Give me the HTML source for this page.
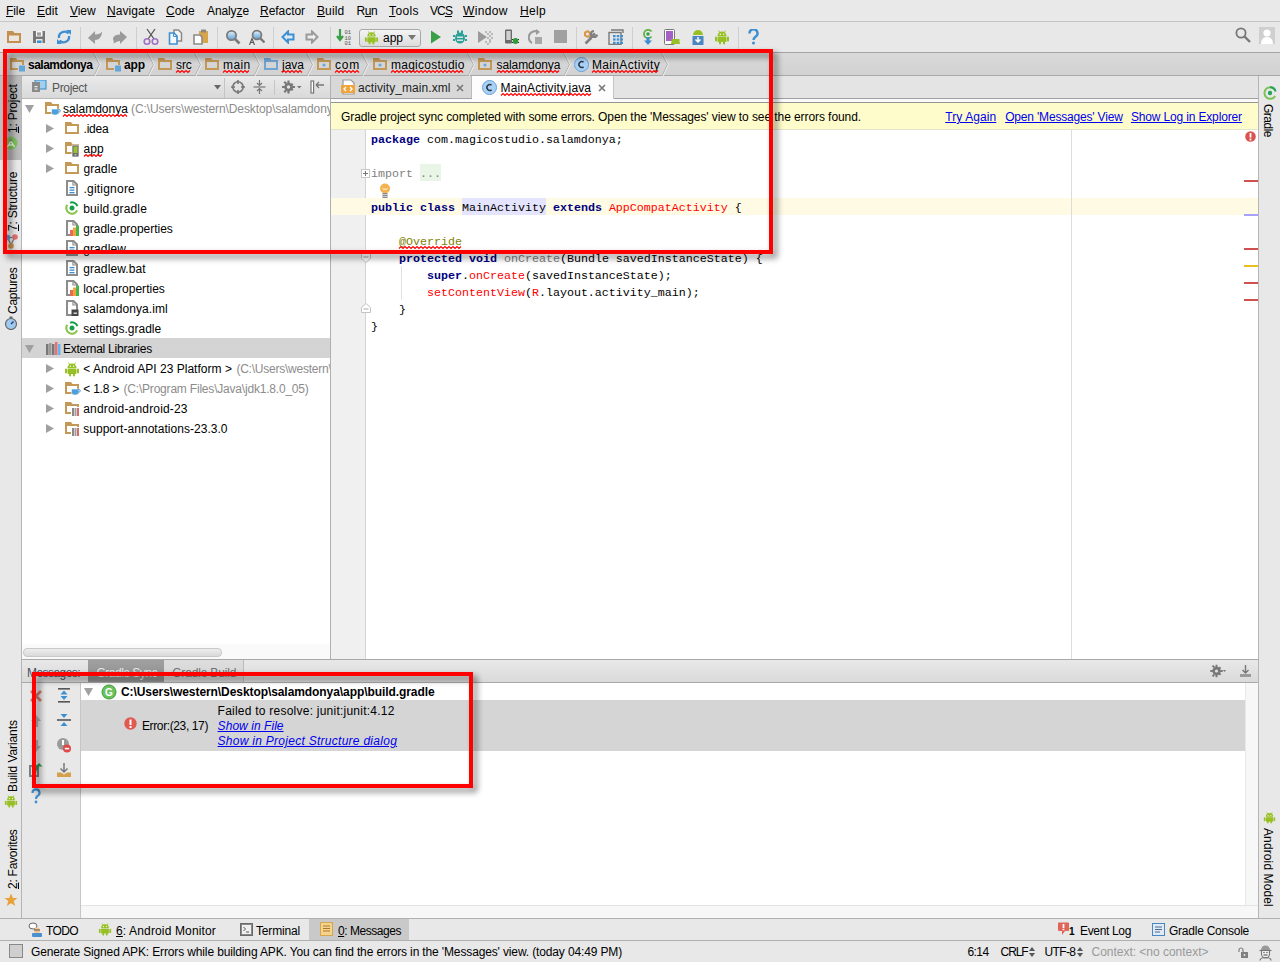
<!DOCTYPE html>
<html><head><meta charset="utf-8"><style>
*{box-sizing:border-box}
html,body{margin:0;padding:0}
body{width:1280px;height:962px;overflow:hidden;position:relative;background:#e8e8e8;font-family:"Liberation Sans",sans-serif;font-size:12px;color:#000}
.a{position:absolute}
.t{position:absolute;white-space:pre;line-height:14px}
u{text-decoration:underline;text-underline-offset:1px;text-decoration-thickness:1px}
.mono{font-family:"Liberation Mono",monospace;font-size:11.67px}
.sq{}
.lnk{color:#0000ee;text-decoration:underline;text-underline-offset:1px}
.kw{color:#000080;font-weight:bold}
.vt{position:absolute;white-space:pre;line-height:14px;transform-origin:0 0;transform:rotate(-90deg)}
.vr{position:absolute;white-space:pre;line-height:14px;transform-origin:0 0;transform:rotate(90deg)}
</style></head><body>
<div class="a" style="left:0px;top:0px;width:1280px;height:21px;background:#e9e9e9"></div>
<div class="a" style="left:0px;top:21px;width:1280px;height:1px;background:#c6c6c6"></div>
<div class="t" style="left:6px;top:4px;;letter-spacing:-0.090px"><u>F</u>ile</div>
<div class="t" style="left:37px;top:4px;;letter-spacing:0.074px"><u>E</u>dit</div>
<div class="t" style="left:70px;top:4px;;letter-spacing:-0.078px"><u>V</u>iew</div>
<div class="t" style="left:107px;top:4px;;letter-spacing:0.078px"><u>N</u>avigate</div>
<div class="t" style="left:166px;top:4px;;letter-spacing:-0.026px"><u>C</u>ode</div>
<div class="t" style="left:207px;top:4px;;letter-spacing:-0.103px">Analy<u>z</u>e</div>
<div class="t" style="left:260px;top:4px;;letter-spacing:-0.045px"><u>R</u>efactor</div>
<div class="t" style="left:317px;top:4px;;letter-spacing:0.099px"><u>B</u>uild</div>
<div class="t" style="left:356.5px;top:4px;;letter-spacing:-0.382px">R<u>u</u>n</div>
<div class="t" style="left:389px;top:4px;;letter-spacing:0.397px"><u>T</u>ools</div>
<div class="t" style="left:430px;top:4px;;letter-spacing:-0.896px">VC<u>S</u></div>
<div class="t" style="left:463px;top:4px;;letter-spacing:0.335px"><u>W</u>indow</div>
<div class="t" style="left:520px;top:4px;;letter-spacing:0.328px"><u>H</u>elp</div>
<div class="a" style="left:0px;top:22px;width:1280px;height:30px;background:#e8e8e8"></div>
<div class="a" style="left:0px;top:52px;width:1280px;height:1px;background:#a4a4a4"></div>
<div class="a" style="left:80px;top:27px;width:1px;height:22px;background:#cfcfcf"></div>
<div class="a" style="left:136px;top:27px;width:1px;height:22px;background:#cfcfcf"></div>
<div class="a" style="left:217px;top:27px;width:1px;height:22px;background:#cfcfcf"></div>
<div class="a" style="left:273px;top:27px;width:1px;height:22px;background:#cfcfcf"></div>
<div class="a" style="left:330px;top:27px;width:1px;height:22px;background:#cfcfcf"></div>
<div class="a" style="left:576px;top:27px;width:1px;height:22px;background:#cfcfcf"></div>
<div class="a" style="left:632px;top:27px;width:1px;height:22px;background:#cfcfcf"></div>
<div class="a" style="left:738px;top:27px;width:1px;height:22px;background:#cfcfcf"></div>
<svg class="a" style="left:7px;top:31px" width="15" height="13" viewBox="0 0 15 13"><path d="M0 0H6L7.5 2H14V12H0Z" fill="#c39050"/><rect x="2" y="4.5" width="10" height="5.5" fill="#ebe6df"/></svg>
<svg class="a" style="left:33px;top:31px" width="13" height="13" viewBox="0 0 13 13"><path d="M0 0H12V12H0Z" fill="#777"/><rect x="3" y="0" width="6.5" height="5.5" fill="#fafafa"/><rect x="4" y="1.6" width="4" height="1" fill="#666"/><rect x="4" y="3.4" width="4" height="1" fill="#666"/><rect x="3" y="8" width="6.5" height="4" fill="#e8e8e8"/><rect x="4" y="9.5" width="4.5" height="2.5" fill="#3a8fd0"/></svg>
<svg class="a" style="left:56px;top:29px" width="16" height="16" viewBox="0 0 16 16"><path d="M12.5 4.5A5.5 5.5 0 0 0 3 9" fill="none" stroke="#3d8fd1" stroke-width="2.4"/><path d="M3.5 11.5A5.5 5.5 0 0 0 13 7" fill="none" stroke="#3d8fd1" stroke-width="2.4"/><path d="M10 1h5v5z" fill="#3d8fd1"/><path d="M6 15H1v-5z" fill="#3d8fd1"/></svg>
<svg class="a" style="left:88px;top:31px" width="15" height="13" viewBox="0 0 15 13"><path d="M0 7L7 0V3.5C10.5 3.5 13 2.5 14 0.5C14 6 11 9 7 9V13Z" fill="#9a9a9a"/></svg>
<svg class="a" style="left:112px;top:31px" width="15" height="13" viewBox="0 0 15 13"><path d="M15 6L8 0V3.5C4.5 3.5 2 4.5 1 7C1 10 3 11.5 1 13C4 11 6 10 8 10V13Z" fill="#9a9a9a"/></svg>
<svg class="a" style="left:143px;top:28px" width="16" height="18" viewBox="0 0 16 18"><path d="M4 1l7 10M12 1L5 11" stroke="#555" stroke-width="1.3"/><circle cx="4" cy="13.5" r="2.8" fill="none" stroke="#a070c0" stroke-width="1.6"/><circle cx="12" cy="13.5" r="2.8" fill="none" stroke="#a070c0" stroke-width="1.6"/></svg>
<svg class="a" style="left:168px;top:29px" width="16" height="16" viewBox="0 0 16 16"><path d="M6 1H10.5L13.5 4V12H6Z" fill="#f4f4f4" stroke="#8a8a8a" stroke-width="1.5"/><path d="M1.5 4H6L9 7V15H1.5Z" fill="#f4f8fc" stroke="#3d8fd1" stroke-width="1.6"/><path d="M5.5 4V7.5H9" fill="none" stroke="#3d8fd1" stroke-width="1"/></svg>
<svg class="a" style="left:193px;top:29px" width="16" height="16" viewBox="0 0 16 16"><rect x="6" y="2" width="9" height="12" fill="#d9a54a"/><rect x="8" y="0.5" width="5" height="3" fill="#888"/><path d="M1 6h6l2 2v7H1z" fill="#fff" stroke="#8a8a8a" stroke-width="1.6"/></svg>
<svg class="a" style="left:225px;top:29px" width="16" height="16" viewBox="0 0 16 16"><defs><linearGradient id="lg1" x1="0" y1="0" x2="0" y2="1"><stop offset="0" stop-color="#e6f2fb"/><stop offset="1" stop-color="#5a9fd6"/></linearGradient></defs><circle cx="6.5" cy="6.5" r="4.6" fill="url(#lg1)" stroke="#7a7a7a" stroke-width="1.8"/><path d="M10 10L14.5 14.5" stroke="#7a7a7a" stroke-width="2.6"/></svg>
<svg class="a" style="left:249px;top:29px" width="16" height="16" viewBox="0 0 16 16"><circle cx="8" cy="6" r="4.4" fill="url(#lg1)" stroke="#7a7a7a" stroke-width="1.8"/><path d="M11.3 9.3L15.5 13.5" stroke="#7a7a7a" stroke-width="2.4"/><path d="M0.5 16L3 9.5 5.5 16M1.5 13.5h3" fill="none" stroke="#555" stroke-width="1.1"/></svg>
<svg class="a" style="left:281px;top:30px" width="14" height="14" viewBox="0 0 14 14"><path d="M7 1.5L1.5 7 7 12.5V9.5H12.5V4.5H7Z" fill="#dcebf7" stroke="#3d8fd1" stroke-width="2" stroke-linejoin="miter"/></svg>
<svg class="a" style="left:305px;top:30px" width="14" height="14" viewBox="0 0 14 14"><path d="M7 1.5L12.5 7 7 12.5V9.5H1.5V4.5H7Z" fill="#eeeeee" stroke="#9a9a9a" stroke-width="2" stroke-linejoin="miter"/></svg>
<svg class="a" style="left:336px;top:28px" width="18" height="18" viewBox="0 0 18 18"><path d="M4 1v10M1 8l3 4 3-4" fill="none" stroke="#3aa048" stroke-width="2.2"/><text x="8.5" y="6" font-family="Liberation Mono" font-size="5.5" fill="#555">01</text><text x="8.5" y="11.5" font-family="Liberation Mono" font-size="5.5" fill="#555">10</text><text x="8.5" y="17" font-family="Liberation Mono" font-size="5.5" fill="#555">01</text></svg>
<div class="a" style="left:359px;top:29px;width:62px;height:18px;border:1px solid #a8a8a8;border-radius:3px;background:linear-gradient(#f4f4f4,#dcdcdc)"></div>
<svg class="a" style="left:364px;top:30px" width="15" height="15" viewBox="0 0 16 16"><g fill="#97c024"><path d="M3.5 7a4.5 4.5 0 0 1 9 0z"/><rect x="3.5" y="7.6" width="9" height="5.5" rx="0.8"/><rect x="1" y="7.6" width="2" height="5" rx="1"/><rect x="13" y="7.6" width="2" height="5" rx="1"/><rect x="5" y="12" width="2" height="3.5" rx="1"/><rect x="9" y="12" width="2" height="3.5" rx="1"/><path d="M4.5 1.5l1.5 2.5M11.5 1.5l-1.5 2.5" stroke="#97c024" stroke-width="0.9"/></g><circle cx="6.3" cy="5.2" r="0.7" fill="#fff"/><circle cx="9.7" cy="5.2" r="0.7" fill="#fff"/></svg>
<div class="t" style="left:383px;top:31px;">app</div>
<svg class="a" style="left:408px;top:35px" width="8" height="5" viewBox="0 0 8 5"><path d="M0 0h8L4 5z" fill="#777"/></svg>
<svg class="a" style="left:430px;top:29px" width="12" height="16" viewBox="0 0 12 16"><path d="M1 1.5v13L11 8z" fill="#3aa048"/></svg>
<svg class="a" style="left:453px;top:30px" width="14" height="14" viewBox="0 0 14 14"><g fill="#2aa198"><ellipse cx="7" cy="8" rx="5" ry="5.5"/><rect x="4" y="0.5" width="2" height="3"/><rect x="8" y="0.5" width="2" height="3"/><rect x="0" y="5" width="2" height="2"/><rect x="12" y="5" width="2" height="2"/><rect x="0" y="9" width="2" height="2"/><rect x="12" y="9" width="2" height="2"/></g><rect x="4" y="6.5" width="6" height="1.4" fill="#e8e8e8"/><rect x="4" y="9.5" width="6" height="1.4" fill="#e8e8e8"/></svg>
<svg class="a" style="left:477px;top:29px" width="16" height="16" viewBox="0 0 16 16"><path d="M1 2v12l9-6z" fill="#9a9a9a"/><g fill="#b8b8b8"><rect x="8" y="2" width="2" height="2"/><rect x="12" y="2" width="2" height="2"/><rect x="10" y="4" width="2" height="2"/><rect x="14" y="4" width="2" height="2"/><rect x="12" y="6" width="2" height="2"/><rect x="10" y="8" width="2" height="2"/><rect x="14" y="8" width="2" height="2"/><rect x="12" y="10" width="2" height="2"/><rect x="8" y="12" width="2" height="2"/><rect x="12" y="12" width="2" height="2"/><rect x="10" y="14" width="2" height="2"/></g></svg>
<svg class="a" style="left:504px;top:29px" width="16" height="16" viewBox="0 0 16 16"><rect x="1" y="0.5" width="7" height="14" rx="1" fill="#6a6a6a"/><rect x="2.3" y="2" width="4.4" height="9" fill="#cfcfcf"/><ellipse cx="11.5" cy="12" rx="2.8" ry="3" fill="#2e9a3a"/><path d="M8 10.5h1M8 13.5h1M14 10.5h1M14 13.5h1" stroke="#333" stroke-width="1"/></svg>
<svg class="a" style="left:528px;top:29px" width="15" height="16" viewBox="0 0 15 16"><path d="M10 3A5.5 5.5 0 1 0 4 14" fill="none" stroke="#9a9a9a" stroke-width="2.2"/><path d="M8 0l4 3-4 3z" fill="#9a9a9a"/><rect x="7" y="8" width="7" height="7" fill="#a8a8a8"/></svg>
<svg class="a" style="left:554px;top:30px" width="13" height="13" viewBox="0 0 13 13"><rect x="0" y="0" width="13" height="13" fill="#a0a0a0"/></svg>
<svg class="a" style="left:583px;top:29px" width="16" height="16" viewBox="0 0 16 16"><path d="M4.5 1L8 3V7L4.5 9 1 7V3Z" fill="#d89a4a"/><circle cx="4.5" cy="5" r="1.5" fill="#e8e8e8"/><path d="M7 9.5L12 4.5" stroke="#808080" stroke-width="2.6"/><path d="M2.5 14.5L8 9" stroke="#808080" stroke-width="2.6"/><path d="M11 2a3 3 0 1 0 3 3.5" fill="none" stroke="#808080" stroke-width="2.2"/></svg>
<svg class="a" style="left:608px;top:29px" width="16" height="16" viewBox="0 0 16 16"><path d="M3 1H15V4" fill="none" stroke="#7a7a7a" stroke-width="1.4"/><rect x="1" y="3.5" width="12" height="12" fill="none" stroke="#7a7a7a" stroke-width="1.4"/><g fill="#3d8fd1"><rect x="5" y="6" width="2.6" height="2.2"/><rect x="8.7" y="6" width="2.6" height="2.2"/><rect x="12.4" y="6" width="2.6" height="2.2"/><rect x="5" y="9.4" width="2.6" height="2.2"/><rect x="8.7" y="9.4" width="2.6" height="2.2"/><rect x="12.4" y="9.4" width="2.6" height="2.2"/><rect x="5" y="12.8" width="2.6" height="2.2"/><rect x="8.7" y="12.8" width="2.6" height="2.2"/><rect x="12.4" y="12.8" width="2.6" height="2.2"/></g></svg>
<svg class="a" style="left:642px;top:29px" width="12" height="16" viewBox="0 0 12 16"><path d="M9.5 2.5A4.2 4.2 0 1 0 9.5 7.5" fill="none" stroke="#62b543" stroke-width="1.8"/><circle cx="6" cy="5" r="1.8" fill="#3aa048"/><path d="M4.5 8h3v3.5H10L6 16 2 11.5h2.5z" fill="#3d8fd1"/></svg>
<svg class="a" style="left:664px;top:29px" width="16" height="16" viewBox="0 0 16 16"><rect x="0.5" y="0.5" width="10" height="15" rx="1" fill="#fff" stroke="#777" stroke-width="1"/><rect x="2" y="2" width="7" height="10" fill="#a560c8"/><path d="M7 15a4 3 0 0 1 9 0z" fill="#97c024"/><path d="M7.5 10h8v5h-8z" fill="#97c024"/></svg>
<svg class="a" style="left:692px;top:29px" width="12" height="16" viewBox="0 0 12 16"><path d="M1 6a5 5 0 0 1 10 0z" fill="#97c024"/><rect x="0.5" y="7" width="11" height="9" fill="#4a86c0"/><path d="M6 8v5M3.5 10.5L6 13l2.5-2.5" fill="none" stroke="#fff" stroke-width="1.5"/></svg>
<svg class="a" style="left:714px;top:29px" width="16" height="16" viewBox="0 0 16 16"><g fill="#97c024"><path d="M3.5 7a4.5 4.5 0 0 1 9 0z"/><rect x="3.5" y="7.6" width="9" height="5.5" rx="0.8"/><rect x="1" y="7.6" width="2" height="5" rx="1"/><rect x="13" y="7.6" width="2" height="5" rx="1"/><rect x="5" y="12" width="2" height="3.5" rx="1"/><rect x="9" y="12" width="2" height="3.5" rx="1"/><path d="M4.5 1.5l1.5 2.5M11.5 1.5l-1.5 2.5" stroke="#97c024" stroke-width="0.9"/></g><circle cx="6.3" cy="5.2" r="0.7" fill="#fff"/><circle cx="9.7" cy="5.2" r="0.7" fill="#fff"/></svg>
<svg class="a" style="left:748px;top:29px" width="11" height="16" viewBox="0 0 11 16"><path d="M1.5 4.5a4 4 0 1 1 6 3.2C6 8.8 5.5 9.5 5.5 11" fill="none" stroke="#3d8fd1" stroke-width="2.4"/><circle cx="5.5" cy="14" r="1.5" fill="#3d8fd1"/></svg>
<svg class="a" style="left:1235px;top:27px" width="16" height="16" viewBox="0 0 16 16"><circle cx="6" cy="6" r="4.6" fill="none" stroke="#777" stroke-width="1.8"/><path d="M9.5 9.5L15 15" stroke="#777" stroke-width="2.4"/></svg>
<svg class="a" style="left:1259px;top:27px" width="16" height="17" viewBox="0 0 16 17"><rect x="0" y="0" width="16" height="17" fill="#cfcfcf"/><circle cx="8" cy="6" r="3.6" fill="#fff"/><path d="M2 17c0-5 2.5-7 6-7s6 2 6 7z" fill="#fff"/></svg>
<div class="a" style="left:0px;top:53px;width:1280px;height:22px;background:linear-gradient(#d9d9d9,#d2d2d2)"></div>
<div class="a" style="left:0px;top:75px;width:1280px;height:1px;background:#a8a8a8"></div>
<svg class="a" style="left:10px;top:58px;overflow:visible" width="16" height="16" viewBox="0 0 16 16"><path d="M0 0H6L7.5 2H14V7H12V4H2V10H8V12H0Z" fill="#c49856"/><rect x="9" y="7.5" width="6" height="6" fill="#62a6da"/></svg>
<div class="t" style="left:28px;top:58px;;letter-spacing:-0.497px"><b>salamdonya</b></div>
<svg class="a" style="left:93px;top:53px" width="9" height="23" viewBox="0 0 9 23"><path d="M0.5 0 L6.5 11.5 L1 23" fill="none" stroke="#b0b0b0" stroke-width="1"/><path d="M1.5 0 L7.5 11.5 L2 23" fill="none" stroke="#ececec" stroke-width="1"/></svg>
<svg class="a" style="left:106px;top:58px;overflow:visible" width="16" height="16" viewBox="0 0 16 16"><path d="M0 0H6L7.5 2H14V7H12V4H2V10H8V12H0Z" fill="#c49856"/><rect x="9" y="7.5" width="6" height="6" fill="#62a6da"/></svg>
<div class="t" style="left:124px;top:58px;;letter-spacing:-0.115px"><b>app</b></div>
<svg class="a" style="left:146.5px;top:53px" width="9" height="23" viewBox="0 0 9 23"><path d="M0.5 0 L6.5 11.5 L1 23" fill="none" stroke="#b0b0b0" stroke-width="1"/><path d="M1.5 0 L7.5 11.5 L2 23" fill="none" stroke="#ececec" stroke-width="1"/></svg>
<svg class="a" style="left:158px;top:58px;overflow:visible" width="16" height="16" viewBox="0 0 16 16"><path d="M0 0H6L7.5 2H14V12H0ZM2 4V10H12V4Z" fill="#c49856" fill-rule="evenodd"/></svg>
<div class="t" style="left:176px;top:58px;;letter-spacing:-0.067px"><span class="sq">src</span></div>
<svg class="a" style="left:176px;top:69px;overflow:visible" width="16.8" height="5"><polyline points="0.0,3.5 2.0,1.5 4.0,3.5 6.0,1.5 8.0,3.5 10.0,1.5 12.0,3.5 14.0,1.5" fill="none" stroke="#ff0000" stroke-width="1.15"/></svg>
<svg class="a" style="left:193.5px;top:53px" width="9" height="23" viewBox="0 0 9 23"><path d="M0.5 0 L6.5 11.5 L1 23" fill="none" stroke="#b0b0b0" stroke-width="1"/><path d="M1.5 0 L7.5 11.5 L2 23" fill="none" stroke="#ececec" stroke-width="1"/></svg>
<svg class="a" style="left:205px;top:58px;overflow:visible" width="16" height="16" viewBox="0 0 16 16"><path d="M0 0H6L7.5 2H14V12H0ZM2 4V10H12V4Z" fill="#c49856" fill-rule="evenodd"/></svg>
<div class="t" style="left:223px;top:58px;;letter-spacing:0.421px"><span class="sq">main</span></div>
<svg class="a" style="left:223px;top:69px;overflow:visible" width="28.7" height="5"><polyline points="0.0,3.5 2.0,1.5 4.0,3.5 6.0,1.5 8.0,3.5 10.0,1.5 12.0,3.5 14.0,1.5 16.0,3.5 18.0,1.5 20.0,3.5 22.0,1.5 24.0,3.5 26.0,1.5" fill="none" stroke="#ff0000" stroke-width="1.15"/></svg>
<svg class="a" style="left:252.5px;top:53px" width="9" height="23" viewBox="0 0 9 23"><path d="M0.5 0 L6.5 11.5 L1 23" fill="none" stroke="#b0b0b0" stroke-width="1"/><path d="M1.5 0 L7.5 11.5 L2 23" fill="none" stroke="#ececec" stroke-width="1"/></svg>
<svg class="a" style="left:264px;top:58px;overflow:visible" width="16" height="16" viewBox="0 0 16 16"><path d="M0 0H6L7.5 2H14V12H0ZM2 4V10H12V4Z" fill="#6ea5d5" fill-rule="evenodd"/></svg>
<div class="t" style="left:282px;top:58px;;letter-spacing:-0.004px"><span class="sq">java</span></div>
<svg class="a" style="left:282px;top:69px;overflow:visible" width="23.0" height="5"><polyline points="0.0,3.5 2.0,1.5 4.0,3.5 6.0,1.5 8.0,3.5 10.0,1.5 12.0,3.5 14.0,1.5 16.0,3.5 18.0,1.5 20.0,3.5" fill="none" stroke="#ff0000" stroke-width="1.15"/></svg>
<svg class="a" style="left:305.5px;top:53px" width="9" height="23" viewBox="0 0 9 23"><path d="M0.5 0 L6.5 11.5 L1 23" fill="none" stroke="#b0b0b0" stroke-width="1"/><path d="M1.5 0 L7.5 11.5 L2 23" fill="none" stroke="#ececec" stroke-width="1"/></svg>
<svg class="a" style="left:317px;top:58px;overflow:visible" width="16" height="16" viewBox="0 0 16 16"><path d="M0 0H6L7.5 2H14V12H0ZM2 4V10H12V4Z" fill="#c49856" fill-rule="evenodd"/><circle cx="7" cy="7" r="1.6" fill="#6aa8da"/></svg>
<div class="t" style="left:335px;top:58px;;letter-spacing:0.776px"><span class="sq">com</span></div>
<svg class="a" style="left:335px;top:69px;overflow:visible" width="26.0" height="5"><polyline points="0.0,3.5 2.0,1.5 4.0,3.5 6.0,1.5 8.0,3.5 10.0,1.5 12.0,3.5 14.0,1.5 16.0,3.5 18.0,1.5 20.0,3.5 22.0,1.5 24.0,3.5" fill="none" stroke="#ff0000" stroke-width="1.15"/></svg>
<svg class="a" style="left:361px;top:53px" width="9" height="23" viewBox="0 0 9 23"><path d="M0.5 0 L6.5 11.5 L1 23" fill="none" stroke="#b0b0b0" stroke-width="1"/><path d="M1.5 0 L7.5 11.5 L2 23" fill="none" stroke="#ececec" stroke-width="1"/></svg>
<svg class="a" style="left:372.5px;top:58px;overflow:visible" width="16" height="16" viewBox="0 0 16 16"><path d="M0 0H6L7.5 2H14V12H0ZM2 4V10H12V4Z" fill="#c49856" fill-rule="evenodd"/><circle cx="7" cy="7" r="1.6" fill="#6aa8da"/></svg>
<div class="t" style="left:391px;top:58px;;letter-spacing:0.248px"><span class="sq">magicostudio</span></div>
<svg class="a" style="left:391px;top:69px;overflow:visible" width="74.7" height="5"><polyline points="0.0,3.5 2.0,1.5 4.0,3.5 6.0,1.5 8.0,3.5 10.0,1.5 12.0,3.5 14.0,1.5 16.0,3.5 18.0,1.5 20.0,3.5 22.0,1.5 24.0,3.5 26.0,1.5 28.0,3.5 30.0,1.5 32.0,3.5 34.0,1.5 36.0,3.5 38.0,1.5 40.0,3.5 42.0,1.5 44.0,3.5 46.0,1.5 48.0,3.5 50.0,1.5 52.0,3.5 54.0,1.5 56.0,3.5 58.0,1.5 60.0,3.5 62.0,1.5 64.0,3.5 66.0,1.5 68.0,3.5 70.0,1.5 72.0,3.5" fill="none" stroke="#ff0000" stroke-width="1.15"/></svg>
<svg class="a" style="left:466.5px;top:53px" width="9" height="23" viewBox="0 0 9 23"><path d="M0.5 0 L6.5 11.5 L1 23" fill="none" stroke="#b0b0b0" stroke-width="1"/><path d="M1.5 0 L7.5 11.5 L2 23" fill="none" stroke="#ececec" stroke-width="1"/></svg>
<svg class="a" style="left:478px;top:58px;overflow:visible" width="16" height="16" viewBox="0 0 16 16"><path d="M0 0H6L7.5 2H14V12H0ZM2 4V10H12V4Z" fill="#c49856" fill-rule="evenodd"/><circle cx="7" cy="7" r="1.6" fill="#6aa8da"/></svg>
<div class="t" style="left:496.5px;top:58px;;letter-spacing:-0.092px"><span class="sq">salamdonya</span></div>
<svg class="a" style="left:496.5px;top:69px;overflow:visible" width="64.8" height="5"><polyline points="0.0,3.5 2.0,1.5 4.0,3.5 6.0,1.5 8.0,3.5 10.0,1.5 12.0,3.5 14.0,1.5 16.0,3.5 18.0,1.5 20.0,3.5 22.0,1.5 24.0,3.5 26.0,1.5 28.0,3.5 30.0,1.5 32.0,3.5 34.0,1.5 36.0,3.5 38.0,1.5 40.0,3.5 42.0,1.5 44.0,3.5 46.0,1.5 48.0,3.5 50.0,1.5 52.0,3.5 54.0,1.5 56.0,3.5 58.0,1.5 60.0,3.5 62.0,1.5" fill="none" stroke="#ff0000" stroke-width="1.15"/></svg>
<svg class="a" style="left:562.5px;top:53px" width="9" height="23" viewBox="0 0 9 23"><path d="M0.5 0 L6.5 11.5 L1 23" fill="none" stroke="#b0b0b0" stroke-width="1"/><path d="M1.5 0 L7.5 11.5 L2 23" fill="none" stroke="#ececec" stroke-width="1"/></svg>
<svg class="a" style="left:574px;top:57px" width="15" height="15" viewBox="0 0 15 15"><circle cx="7.5" cy="7.5" r="7" fill="#a9d1f5" stroke="#6a9ed6" stroke-width="1"/><path d="M9.6 5.2A2.9 2.9 0 1 0 9.6 9.8" fill="none" stroke="#2a3a4a" stroke-width="1.5"/></svg>
<div class="t" style="left:592px;top:58px;;letter-spacing:0.332px"><span class="sq">MainActivity</span></div>
<svg class="a" style="left:592px;top:69px;overflow:visible" width="69.0" height="5"><polyline points="0.0,3.5 2.0,1.5 4.0,3.5 6.0,1.5 8.0,3.5 10.0,1.5 12.0,3.5 14.0,1.5 16.0,3.5 18.0,1.5 20.0,3.5 22.0,1.5 24.0,3.5 26.0,1.5 28.0,3.5 30.0,1.5 32.0,3.5 34.0,1.5 36.0,3.5 38.0,1.5 40.0,3.5 42.0,1.5 44.0,3.5 46.0,1.5 48.0,3.5 50.0,1.5 52.0,3.5 54.0,1.5 56.0,3.5 58.0,1.5 60.0,3.5 62.0,1.5 64.0,3.5 66.0,1.5" fill="none" stroke="#ff0000" stroke-width="1.15"/></svg>
<svg class="a" style="left:661px;top:53px" width="9" height="23" viewBox="0 0 9 23"><path d="M0.5 0 L6.5 11.5 L1 23" fill="none" stroke="#b0b0b0" stroke-width="1"/><path d="M1.5 0 L7.5 11.5 L2 23" fill="none" stroke="#ececec" stroke-width="1"/></svg>
<div class="a" style="left:0px;top:76px;width:21px;height:843px;background:#e8e8e8"></div>
<div class="a" style="left:21px;top:76px;width:1px;height:843px;background:#b5b5b5"></div>
<div class="a" style="left:0px;top:76px;width:21px;height:84px;background:linear-gradient(90deg,#c2c2c2,#b2b2b2 60%,#bdbdbd)"></div>
<div class="vt" style="left:5.5px;top:132.5px;letter-spacing:-0.210px"><u>1</u>: Project</div>
<div class="vt" style="left:5.5px;top:230.5px;letter-spacing:-0.237px"><u>7</u>: Structure</div>
<div class="vt" style="left:5.5px;top:313.5px;letter-spacing:-0.288px">Captures</div>
<div class="vt" style="left:5.5px;top:791.9px;letter-spacing:-0.097px">Build Variants</div>
<div class="vt" style="left:5.5px;top:889.1px;letter-spacing:-0.259px"><u>2</u>: Favorites</div>
<svg class="a" style="left:4px;top:136px" width="14" height="14" viewBox="0 0 14 14"><circle cx="7" cy="7" r="6.5" fill="#7cc05a"/><path d="M3.5 11L7 5l3.5 6M5 9h4" fill="none" stroke="#e8f4e0" stroke-width="1.3"/><circle cx="7" cy="4" r="1.5" fill="#888"/></svg>
<svg class="a" style="left:4px;top:233px" width="14" height="17" viewBox="0 0 14 17"><path d="M3.5 4.5L10.5 4.5M3.5 4.5L7 12M10.5 4.5L7 12" stroke="#777" stroke-width="1.2"/><circle cx="3.5" cy="4.5" r="2.8" fill="#5a9bd5"/><circle cx="11" cy="4" r="2.8" fill="#e07070"/><circle cx="7" cy="13" r="2.8" fill="#c9924a"/></svg>
<svg class="a" style="left:4px;top:316px" width="14" height="14" viewBox="0 0 14 14"><circle cx="7" cy="8" r="5.5" fill="#9ccaf0" stroke="#666" stroke-width="1.2"/><path d="M7 8L9.5 5.5" stroke="#335" stroke-width="1.2"/><rect x="5.5" y="0.5" width="3" height="2" fill="#666"/></svg>
<svg class="a" style="left:4px;top:794px" width="14" height="14" viewBox="0 0 16 16"><g fill="#97c024"><path d="M3.5 7a4.5 4.5 0 0 1 9 0z"/><rect x="3.5" y="7.6" width="9" height="5.5" rx="0.8"/><rect x="1" y="7.6" width="2" height="5" rx="1"/><rect x="13" y="7.6" width="2" height="5" rx="1"/><rect x="5" y="12" width="2" height="3.5" rx="1"/><rect x="9" y="12" width="2" height="3.5" rx="1"/><path d="M4.5 1.5l1.5 2.5M11.5 1.5l-1.5 2.5" stroke="#97c024" stroke-width="0.9"/></g><circle cx="6.3" cy="5.2" r="0.7" fill="#fff"/><circle cx="9.7" cy="5.2" r="0.7" fill="#fff"/></svg>
<svg class="a" style="left:4px;top:893px" width="14" height="14" viewBox="0 0 14 14"><path d="M7 0.5L8.9 5H13.5L9.8 8L11.2 13L7 10.2 2.8 13 4.2 8 0.5 5H5.1Z" fill="#e8a23a"/></svg>
<div class="a" style="left:1258px;top:76px;width:1px;height:843px;background:#b5b5b5"></div>
<div class="a" style="left:1259px;top:76px;width:21px;height:843px;background:#e8e8e8"></div>
<div class="vr" style="left:1275px;top:103.5px;letter-spacing:-0.505px">Gradle</div>
<div class="vr" style="left:1275px;top:828.2px;letter-spacing:0.116px">Android Model</div>
<svg class="a" style="left:1263px;top:86px" width="14" height="14" viewBox="0 0 14 14"><path d="M12.2 4A5.8 5.8 0 1 0 12.2 10" fill="none" stroke="#7cc05a" stroke-width="2"/><path d="M7 1.2A5.8 5.8 0 0 1 12.6 5.5" fill="none" stroke="#25a55a" stroke-width="2"/><circle cx="7" cy="7" r="2.2" fill="#25a55a"/></svg>
<svg class="a" style="left:1263px;top:811px" width="13" height="13" viewBox="0 0 16 16"><g fill="#97c024"><path d="M3.5 7a4.5 4.5 0 0 1 9 0z"/><rect x="3.5" y="7.6" width="9" height="5.5" rx="0.8"/><rect x="1" y="7.6" width="2" height="5" rx="1"/><rect x="13" y="7.6" width="2" height="5" rx="1"/><rect x="5" y="12" width="2" height="3.5" rx="1"/><rect x="9" y="12" width="2" height="3.5" rx="1"/><path d="M4.5 1.5l1.5 2.5M11.5 1.5l-1.5 2.5" stroke="#97c024" stroke-width="0.9"/></g><circle cx="6.3" cy="5.2" r="0.7" fill="#fff"/><circle cx="9.7" cy="5.2" r="0.7" fill="#fff"/></svg>
<div class="a" style="left:22px;top:76px;width:308px;height:22px;background:linear-gradient(#eaeaea,#d9d9d9)"></div>
<div class="a" style="left:22px;top:98px;width:308px;height:1px;background:#b9b9b9"></div>
<div class="a" style="left:224px;top:78px;width:1px;height:20px;background:#c4c4c4"></div>
<div class="a" style="left:330px;top:76px;width:1px;height:584px;background:#b0b0b0"></div>
<div class="a" style="left:22px;top:99px;width:308px;height:561px;background:#fff"></div>
<div class="t" style="left:52px;top:81px;color:#555;letter-spacing:-0.337px">Project</div>
<svg class="a" style="left:32px;top:80px" width="16" height="14" viewBox="0 0 16 14"><rect x="0" y="2" width="8" height="10" fill="#8a8a8a"/><rect x="3" y="0" width="11" height="9" fill="#9fd0f0" stroke="#4a96cc" stroke-width="1.2"/><rect x="0" y="2" width="8" height="10" fill="#8a8a8a"/><rect x="2.5" y="6" width="3" height="1.2" fill="#eee"/><rect x="2.5" y="8.5" width="3" height="1.2" fill="#eee"/></svg>
<svg class="a" style="left:214px;top:85px" width="7" height="5" viewBox="0 0 7 5"><path d="M0 0H7L3.5 4.5Z" fill="#666"/></svg>
<svg class="a" style="left:231px;top:80px" width="14" height="14" viewBox="0 0 14 14"><circle cx="7" cy="7" r="5.2" fill="none" stroke="#777" stroke-width="1.6"/><path d="M7 0v4M7 10v4M0 7h4M10 7h4" stroke="#777" stroke-width="1.6"/></svg>
<svg class="a" style="left:253px;top:80px" width="13" height="14" viewBox="0 0 13 14"><path d="M0.5 7h12" stroke="#777" stroke-width="1.2"/><path d="M6.5 0v5M4 3l2.5 2.5L9 3M6.5 14V9M4 11l2.5-2.5L9 11" fill="none" stroke="#777" stroke-width="1.2"/><path d="M0.5 5h12M0.5 9h12" stroke="#777" stroke-width="0.8" opacity="0.0"/></svg>
<div class="a" style="left:274px;top:80px;width:1px;height:15px;background:#c4c4c4"></div>
<svg class="a" style="left:282px;top:80px" width="20" height="14" viewBox="0 0 20 14"><g fill="#777"><circle cx="6.5" cy="7" r="4.3"/><path d="M5.4 0.5h2.2v2.8H5.4zM5.4 10.7h2.2v2.8H5.4zM0 5.9h2.8v2.2H0zM10.2 5.9H13v2.2h-2.8zM1.5 2.4l1.5-1.5 2 2-1.5 1.5zM8 9.1l1.5-1.5 2 2-1.5 1.5zM1.5 11.6l2-2 1.5 1.5-2 2zM8 4.9l2-2 1.5 1.5-2 2z"/></g><circle cx="6.5" cy="7" r="1.7" fill="#e4e4e4"/><path d="M15 6h4.5l-2.25 2.5z" fill="#777"/></svg>
<svg class="a" style="left:310px;top:80px" width="14" height="14" viewBox="0 0 14 14"><rect x="1" y="1" width="2.6" height="12" fill="#fff" stroke="#777" stroke-width="1.2"/><path d="M6 5h8M6 5l3-3M6 5l3 3" fill="none" stroke="#777" stroke-width="1.3"/></svg>
<div class="a" style="left:22px;top:99px;width:308px;height:545px;overflow:hidden">
<div class="a" style="left:-22px;top:-99px;width:330px;height:700px">
<svg class="a" style="left:25px;top:105px" width="9" height="8" viewBox="0 0 9 8"><path d="M0 0H9L4.5 8Z" fill="#a0a0a0"/></svg>
<svg class="a" style="left:45px;top:102px;overflow:visible" width="16" height="16" viewBox="0 0 16 16"><path d="M0 0H6L7.5 2H14V12H0ZM2 4V10H12V4Z" fill="#c49856" fill-rule="evenodd"/><path d="M6.5 7H13.5V10.5A2.5 2.5 0 0 1 11 13H9A2.5 2.5 0 0 1 6.5 10.5Z" fill="#4aa0dc" stroke="#fff" stroke-width="0.6"/><circle cx="14" cy="8.8" r="1.3" fill="none" stroke="#4aa0dc" stroke-width="1"/></svg>
<div class="t" style="left:63px;top:102px;;letter-spacing:0.028px"><span class="sq">salamdonya</span></div>
<svg class="a" style="left:63px;top:113px;overflow:visible" width="66.0" height="5"><polyline points="0.0,3.5 2.0,1.5 4.0,3.5 6.0,1.5 8.0,3.5 10.0,1.5 12.0,3.5 14.0,1.5 16.0,3.5 18.0,1.5 20.0,3.5 22.0,1.5 24.0,3.5 26.0,1.5 28.0,3.5 30.0,1.5 32.0,3.5 34.0,1.5 36.0,3.5 38.0,1.5 40.0,3.5 42.0,1.5 44.0,3.5 46.0,1.5 48.0,3.5 50.0,1.5 52.0,3.5 54.0,1.5 56.0,3.5 58.0,1.5 60.0,3.5 62.0,1.5 64.0,3.5" fill="none" stroke="#ff0000" stroke-width="1.15"/></svg>
<div class="t" style="left:131px;top:102px;;letter-spacing:-0.087px"><span style="color:#8c8c8c">(C:\Users\western\Desktop\salamdonya)</span></div>
<svg class="a" style="left:46px;top:124px" width="8" height="9" viewBox="0 0 8 9"><path d="M0 0V9L8 4.5Z" fill="#a0a0a0"/></svg>
<svg class="a" style="left:65px;top:122px;overflow:visible" width="16" height="16" viewBox="0 0 16 16"><path d="M0 0H6L7.5 2H14V12H0ZM2 4V10H12V4Z" fill="#c49856" fill-rule="evenodd"/></svg>
<div class="t" style="left:83.5px;top:122px;;letter-spacing:-0.206px">.idea</div>
<svg class="a" style="left:46px;top:144px" width="8" height="9" viewBox="0 0 8 9"><path d="M0 0V9L8 4.5Z" fill="#a0a0a0"/></svg>
<svg class="a" style="left:65px;top:142px;overflow:visible" width="16" height="16" viewBox="0 0 16 16"><path d="M0 0H6L7.5 2H14V12H0ZM2 4V10H12V4Z" fill="#c49856" fill-rule="evenodd"/><rect x="7" y="3" width="7" height="12" rx="0.8" fill="#6b6b6b" stroke="#fff" stroke-width="0.7"/><rect x="8.5" y="4.5" width="4" height="6.5" fill="#9bc12e"/><rect x="9.5" y="12.2" width="2" height="1.2" fill="#ccc"/></svg>
<div class="t" style="left:83.5px;top:142px;;letter-spacing:0.073px"><span class="sq">app</span></div>
<svg class="a" style="left:83.5px;top:153px;overflow:visible" width="21.2" height="5"><polyline points="0.0,3.5 2.0,1.5 4.0,3.5 6.0,1.5 8.0,3.5 10.0,1.5 12.0,3.5 14.0,1.5 16.0,3.5 18.0,1.5" fill="none" stroke="#ff0000" stroke-width="1.15"/></svg>
<svg class="a" style="left:46px;top:164px" width="8" height="9" viewBox="0 0 8 9"><path d="M0 0V9L8 4.5Z" fill="#a0a0a0"/></svg>
<svg class="a" style="left:65px;top:162px;overflow:visible" width="16" height="16" viewBox="0 0 16 16"><path d="M0 0H6L7.5 2H14V12H0ZM2 4V10H12V4Z" fill="#c49856" fill-rule="evenodd"/></svg>
<div class="t" style="left:83.5px;top:162px;;letter-spacing:0.065px">gradle</div>
<svg class="a" style="left:66px;top:180px" width="12" height="16" viewBox="0 0 12 16"><path d="M1 1H7.5L11 4.5V15H1Z" fill="#fff" stroke="#8c8c8c" stroke-width="2" stroke-linejoin="miter"/><path d="M7 0.5V5H11.5" fill="none" stroke="#8c8c8c" stroke-width="1.2"/><rect x="3.5" y="7" width="5" height="1.3" fill="#3d8fd1"/><rect x="3.5" y="9.5" width="5" height="1.3" fill="#3d8fd1"/><rect x="3.5" y="12" width="5" height="1.3" fill="#3d8fd1"/></svg>
<div class="t" style="left:83.5px;top:182px;;letter-spacing:0.212px">.gitignore</div>
<svg class="a" style="left:65px;top:201px" width="14" height="14" viewBox="0 0 14 14"><path d="M2.33 3.73A5.7 5.7 0 1 0 12.17 9.41" fill="none" stroke="#8cc34a" stroke-width="2.1"/><path d="M5.05 1.64A5.7 5.7 0 0 1 12.36 5.05" fill="none" stroke="#16a04c" stroke-width="2.1"/><circle cx="7" cy="7" r="2.5" fill="#16a04c"/></svg>
<div class="t" style="left:83.2px;top:202px;;letter-spacing:0.146px">build.gradle</div>
<svg class="a" style="left:66px;top:220px;overflow:visible" width="13" height="16" viewBox="0 0 13 16"><path d="M1 1H7.5L11 4.5V15H1Z" fill="#fff" stroke="#8c8c8c" stroke-width="2" stroke-linejoin="miter"/><path d="M7 0.5V5H11.5" fill="none" stroke="#8c8c8c" stroke-width="1.2"/><rect x="4" y="10" width="3" height="6" fill="#e8685a"/><rect x="7" y="7.5" width="3" height="8.5" fill="#f0a53c"/><rect x="10" y="5.5" width="3" height="10.5" fill="#46b34f"/></svg>
<div class="t" style="left:83.2px;top:222px;;letter-spacing:-0.027px">gradle.properties</div>
<svg class="a" style="left:66px;top:240px" width="12" height="16" viewBox="0 0 12 16"><path d="M1 1H7.5L11 4.5V15H1Z" fill="#fff" stroke="#8c8c8c" stroke-width="2" stroke-linejoin="miter"/><path d="M7 0.5V5H11.5" fill="none" stroke="#8c8c8c" stroke-width="1.2"/><rect x="3.5" y="7" width="5" height="1.3" fill="#3d8fd1"/><rect x="3.5" y="9.5" width="5" height="1.3" fill="#3d8fd1"/><rect x="3.5" y="12" width="5" height="1.3" fill="#3d8fd1"/></svg>
<div class="t" style="left:83.2px;top:242px;;letter-spacing:0.110px">gradlew</div>
<svg class="a" style="left:66px;top:260px" width="12" height="16" viewBox="0 0 12 16"><path d="M1 1H7.5L11 4.5V15H1Z" fill="#fff" stroke="#8c8c8c" stroke-width="2" stroke-linejoin="miter"/><path d="M7 0.5V5H11.5" fill="none" stroke="#8c8c8c" stroke-width="1.2"/><rect x="3.5" y="7" width="5" height="1.3" fill="#3d8fd1"/><rect x="3.5" y="9.5" width="5" height="1.3" fill="#3d8fd1"/><rect x="3.5" y="12" width="5" height="1.3" fill="#3d8fd1"/></svg>
<div class="t" style="left:83.2px;top:262px;;letter-spacing:0.110px">gradlew.bat</div>
<svg class="a" style="left:66px;top:280px;overflow:visible" width="13" height="16" viewBox="0 0 13 16"><path d="M1 1H7.5L11 4.5V15H1Z" fill="#fff" stroke="#8c8c8c" stroke-width="2" stroke-linejoin="miter"/><path d="M7 0.5V5H11.5" fill="none" stroke="#8c8c8c" stroke-width="1.2"/><rect x="4" y="10" width="3" height="6" fill="#e8685a"/><rect x="7" y="7.5" width="3" height="8.5" fill="#f0a53c"/><rect x="10" y="5.5" width="3" height="10.5" fill="#46b34f"/></svg>
<div class="t" style="left:83.2px;top:282px;;letter-spacing:0.020px">local.properties</div>
<svg class="a" style="left:66px;top:300px;overflow:visible" width="13" height="16" viewBox="0 0 13 16"><path d="M1 1H7.5L11 4.5V15H1Z" fill="#fff" stroke="#8c8c8c" stroke-width="2" stroke-linejoin="miter"/><path d="M7 0.5V5H11.5" fill="none" stroke="#8c8c8c" stroke-width="1.2"/><rect x="5.5" y="9.5" width="7" height="6.5" fill="#444"/><rect x="7.5" y="12.5" width="3.5" height="1.4" fill="#ddd"/></svg>
<div class="t" style="left:83.2px;top:302px;;letter-spacing:0.088px">salamdonya.iml</div>
<svg class="a" style="left:65px;top:321px" width="14" height="14" viewBox="0 0 14 14"><path d="M2.33 3.73A5.7 5.7 0 1 0 12.17 9.41" fill="none" stroke="#8cc34a" stroke-width="2.1"/><path d="M5.05 1.64A5.7 5.7 0 0 1 12.36 5.05" fill="none" stroke="#16a04c" stroke-width="2.1"/><circle cx="7" cy="7" r="2.5" fill="#16a04c"/></svg>
<div class="t" style="left:83.2px;top:322px;;letter-spacing:-0.003px">settings.gradle</div>
<div class="a" style="left:22px;top:338px;width:308px;height:20px;background:#d4d4d4"></div>
<svg class="a" style="left:45px;top:341px" width="16" height="16" viewBox="0 0 16 16"><rect x="1" y="3" width="2.5" height="11" fill="#777"/><rect x="4" y="2" width="2.5" height="12" fill="#999"/><rect x="7" y="3" width="2.5" height="11" fill="#777"/><rect x="10" y="1" width="2.5" height="13" fill="#e57373"/><rect x="13" y="3" width="2.5" height="11" fill="#64b5f6"/></svg>
<svg class="a" style="left:25px;top:345px" width="9" height="8" viewBox="0 0 9 8"><path d="M0 0H9L4.5 8Z" fill="#a0a0a0"/></svg>
<div class="t" style="left:63px;top:342px;;letter-spacing:-0.249px">External Libraries</div>
<svg class="a" style="left:46px;top:364px" width="8" height="9" viewBox="0 0 8 9"><path d="M0 0V9L8 4.5Z" fill="#a0a0a0"/></svg>
<svg class="a" style="left:64px;top:361px" width="16" height="16" viewBox="0 0 16 16"><g fill="#97c024"><path d="M3.5 7a4.5 4.5 0 0 1 9 0z"/><rect x="3.5" y="7.6" width="9" height="5.5" rx="0.8"/><rect x="1" y="7.6" width="2" height="5" rx="1"/><rect x="13" y="7.6" width="2" height="5" rx="1"/><rect x="5" y="12" width="2" height="3.5" rx="1"/><rect x="9" y="12" width="2" height="3.5" rx="1"/><path d="M4.5 1.5l1.5 2.5M11.5 1.5l-1.5 2.5" stroke="#97c024" stroke-width="0.9"/></g><circle cx="6.3" cy="5.2" r="0.7" fill="#fff"/><circle cx="9.7" cy="5.2" r="0.7" fill="#fff"/></svg>
<div class="t" style="left:83.2px;top:362px;;letter-spacing:0.026px">&lt; Android API 23 Platform &gt;</div>
<div class="t" style="left:236.4px;top:362px;;letter-spacing:-0.237px"><span style="color:#8c8c8c">(C:\Users\western\AppData\Local\Android\sdk)</span></div>
<svg class="a" style="left:46px;top:384px" width="8" height="9" viewBox="0 0 8 9"><path d="M0 0V9L8 4.5Z" fill="#a0a0a0"/></svg>
<svg class="a" style="left:65px;top:382px;overflow:visible" width="16" height="16" viewBox="0 0 16 16"><path d="M0 0H6L7.5 2H14V12H0ZM2 4V10H12V4Z" fill="#c49856" fill-rule="evenodd"/><path d="M6.5 7H13.5V10.5A2.5 2.5 0 0 1 11 13H9A2.5 2.5 0 0 1 6.5 10.5Z" fill="#4aa0dc" stroke="#fff" stroke-width="0.6"/><circle cx="14" cy="8.8" r="1.3" fill="none" stroke="#4aa0dc" stroke-width="1"/></svg>
<div class="t" style="left:83.2px;top:382px;;letter-spacing:-0.196px">&lt; 1.8 &gt;</div>
<div class="t" style="left:123.5px;top:382px;;letter-spacing:-0.199px"><span style="color:#8c8c8c">(C:\Program Files\Java\jdk1.8.0_05)</span></div>
<svg class="a" style="left:46px;top:404px" width="8" height="9" viewBox="0 0 8 9"><path d="M0 0V9L8 4.5Z" fill="#a0a0a0"/></svg>
<svg class="a" style="left:65px;top:402px;overflow:visible" width="16" height="16" viewBox="0 0 16 16"><path d="M0 0H6L7.5 2H14V12H0ZM2 4V10H12V4Z" fill="#c49856" fill-rule="evenodd"/><rect x="6" y="5" width="9" height="9" fill="#fff"/><rect x="7" y="6" width="2" height="8" fill="#8a8a8a"/><rect x="9.5" y="6" width="2" height="8" fill="#a0a0a0"/><rect x="12" y="6" width="2" height="8" fill="#d96b6b"/></svg>
<div class="t" style="left:83.2px;top:402px;;letter-spacing:0.172px">android-android-23</div>
<svg class="a" style="left:46px;top:424px" width="8" height="9" viewBox="0 0 8 9"><path d="M0 0V9L8 4.5Z" fill="#a0a0a0"/></svg>
<svg class="a" style="left:65px;top:422px;overflow:visible" width="16" height="16" viewBox="0 0 16 16"><path d="M0 0H6L7.5 2H14V12H0ZM2 4V10H12V4Z" fill="#c49856" fill-rule="evenodd"/><rect x="6" y="5" width="9" height="9" fill="#fff"/><rect x="7" y="6" width="2" height="8" fill="#8a8a8a"/><rect x="9.5" y="6" width="2" height="8" fill="#a0a0a0"/><rect x="12" y="6" width="2" height="8" fill="#d96b6b"/></svg>
<div class="t" style="left:83.2px;top:422px;;letter-spacing:0.037px">support-annotations-23.3.0</div>
</div></div>
<div class="a" style="left:22px;top:644px;width:308px;height:16px;background:#fafafa"></div>
<div class="a" style="left:23px;top:648px;width:199px;height:9px;background:linear-gradient(#ededed,#d9d9d9);border:1px solid #c8c8c8;border-radius:4px"></div>
<div class="a" style="left:331px;top:76px;width:927px;height:22px;background:#e4e4e4"></div>
<div class="a" style="left:331px;top:98px;width:927px;height:1px;background:#a0a0a0"></div>
<div class="a" style="left:331px;top:76px;width:141px;height:22px;background:#d8d8d8"></div>
<div class="a" style="left:471px;top:76px;width:1px;height:22px;background:#bcbcbc"></div>
<div class="a" style="left:472px;top:76px;width:142px;height:26px;background:#fdfdfd"></div>
<div class="a" style="left:613px;top:76px;width:1px;height:23px;background:#c4c4c4"></div>
<div class="a" style="left:331px;top:99px;width:141px;height:3px;background:#fafafa"></div>
<div class="a" style="left:614px;top:99px;width:644px;height:3px;background:#fafafa"></div>
<div class="a" style="left:331px;top:102px;width:927px;height:1px;background:#959595"></div>
<svg class="a" style="left:340px;top:79px" width="16" height="16" viewBox="0 0 16 16"><path d="M3 1h8l3 3v11H3z" fill="#fff" stroke="#999" stroke-width="1.2"/><rect x="1" y="6" width="14" height="8" fill="#f0a53c"/><path d="M6 8l-2 2 2 2M10 8l2 2-2 2" fill="none" stroke="#fff" stroke-width="1.3"/></svg>
<div class="t" style="left:358px;top:81px;color:#222;letter-spacing:0.067px">activity_main.xml</div>
<svg class="a" style="left:456px;top:84px" width="8" height="8" viewBox="0 0 8 8"><path d="M1 1l6 6M7 1l-6 6" stroke="#777" stroke-width="1.6"/></svg>
<svg class="a" style="left:482px;top:80px" width="15" height="15" viewBox="0 0 15 15"><circle cx="7.5" cy="7.5" r="7" fill="#a9d1f5" stroke="#6a9ed6" stroke-width="1"/><path d="M9.6 5.2A2.9 2.9 0 1 0 9.6 9.8" fill="none" stroke="#2a3a4a" stroke-width="1.5"/></svg>
<div class="t" style="left:500.6px;top:81px;;letter-spacing:0.119px"><span class="sq">MainActivity.java</span></div>
<svg class="a" style="left:500.6px;top:92px;overflow:visible" width="92.4" height="5"><polyline points="0.0,3.5 2.0,1.5 4.0,3.5 6.0,1.5 8.0,3.5 10.0,1.5 12.0,3.5 14.0,1.5 16.0,3.5 18.0,1.5 20.0,3.5 22.0,1.5 24.0,3.5 26.0,1.5 28.0,3.5 30.0,1.5 32.0,3.5 34.0,1.5 36.0,3.5 38.0,1.5 40.0,3.5 42.0,1.5 44.0,3.5 46.0,1.5 48.0,3.5 50.0,1.5 52.0,3.5 54.0,1.5 56.0,3.5 58.0,1.5 60.0,3.5 62.0,1.5 64.0,3.5 66.0,1.5 68.0,3.5 70.0,1.5 72.0,3.5 74.0,1.5 76.0,3.5 78.0,1.5 80.0,3.5 82.0,1.5 84.0,3.5 86.0,1.5 88.0,3.5 90.0,1.5" fill="none" stroke="#ff0000" stroke-width="1.15"/></svg>
<svg class="a" style="left:598px;top:84px" width="8" height="8" viewBox="0 0 8 8"><path d="M1 1l6 6M7 1l-6 6" stroke="#777" stroke-width="1.6"/></svg>
<div class="a" style="left:331px;top:103px;width:927px;height:27px;background:#fffccc"></div>
<div class="a" style="left:331px;top:129px;width:927px;height:1px;background:#e4e4d0"></div>
<div class="t" style="left:341px;top:110px;;letter-spacing:-0.077px">Gradle project sync completed with some errors. Open the 'Messages' view to see the errors found.</div>
<div class="t" style="left:945.3px;top:110px;;letter-spacing:0.083px"><span class="lnk">Try Again</span></div>
<div class="t" style="left:1005.2px;top:110px;;letter-spacing:-0.180px"><span class="lnk">Open 'Messages' View</span></div>
<div class="t" style="left:1130.9px;top:110px;;letter-spacing:-0.154px"><span class="lnk">Show Log in Explorer</span></div>
<div class="a" style="left:331px;top:130px;width:927px;height:529px;background:#fff"></div>
<div class="a" style="left:331px;top:130px;width:35px;height:529px;background:#f0f0f0"></div>
<div class="a" style="left:365px;top:130px;width:1px;height:529px;background:#d4d4d4"></div>
<div class="a" style="left:331px;top:198px;width:35px;height:17px;background:#fffae3"></div>
<div class="a" style="left:366px;top:198px;width:892px;height:17px;background:#fffae3"></div>
<div class="a" style="left:462px;top:198px;width:84px;height:17px;background:#e4e4ff"></div>
<div class="a" style="left:1071px;top:130px;width:1px;height:529px;background:#dcdcdc"></div>
<div class="a" style="left:420px;top:164px;width:21px;height:17px;background:#e9f5e6"></div>
<svg class="a" style="left:361px;top:169px" width="9" height="9" viewBox="0 0 9 9"><rect x="0.5" y="0.5" width="8" height="8" fill="#fff" stroke="#c8c8c8"/><path d="M2 4.5h5M4.5 2v5" stroke="#777"/></svg>
<svg class="a" style="left:361px;top:253px" width="10" height="11" viewBox="0 0 10 11"><path d="M0.5 0.5h9v5l-4.5 4-4.5-4z" fill="#fff" stroke="#c4c4c4"/><path d="M2.5 4h5" stroke="#aaa"/></svg>
<svg class="a" style="left:361px;top:303px" width="10" height="11" viewBox="0 0 10 11"><path d="M0.5 9.5h9v-5l-4.5-4-4.5 4z" fill="#fff" stroke="#c4c4c4"/><path d="M2.5 6h5" stroke="#aaa"/></svg>
<div class="a" style="left:401px;top:266px;width:1px;height:34px;background:#e2e2e2"></div>
<svg class="a" style="left:379px;top:183px" width="12" height="16" viewBox="0 0 12 16"><circle cx="6" cy="5.5" r="5" fill="#f4b350"/><path d="M3.5 5l1.5 2 1-1.5 1 1.5 1.5-2" fill="none" stroke="#fff5d0" stroke-width="0.8"/><rect x="3.5" y="10" width="5" height="5" fill="#888"/><path d="M3.5 11.5h5M3.5 13.5h5" stroke="#ddd" stroke-width="0.8"/></svg>
<div class="t mono" style="left:371px;top:133px;"><span class="kw">package</span> com.magicostudio.salamdonya;</div>
<div class="t mono" style="left:371px;top:167px;"><span style="color:#808080">import</span> <span style="color:#808080">...</span></div>
<div class="t mono" style="left:371px;top:201px;"><span class="kw">public</span> <span class="kw">class</span> MainActivity <span class="kw">extends</span> <span style="color:#ff0000">AppCompatActivity</span> {</div>
<div class="t mono" style="left:371px;top:235px;">    <span style="color:#808000">@Override</span></div>
<svg class="a" style="left:399px;top:245px;overflow:visible" width="65.0" height="5"><polyline points="0.0,3.5 2.0,1.5 4.0,3.5 6.0,1.5 8.0,3.5 10.0,1.5 12.0,3.5 14.0,1.5 16.0,3.5 18.0,1.5 20.0,3.5 22.0,1.5 24.0,3.5 26.0,1.5 28.0,3.5 30.0,1.5 32.0,3.5 34.0,1.5 36.0,3.5 38.0,1.5 40.0,3.5 42.0,1.5 44.0,3.5 46.0,1.5 48.0,3.5 50.0,1.5 52.0,3.5 54.0,1.5 56.0,3.5 58.0,1.5 60.0,3.5 62.0,1.5" fill="none" stroke="#ff0000" stroke-width="1.15"/></svg>
<div class="t mono" style="left:371px;top:252px;">    <span class="kw">protected</span> <span class="kw">void</span> <span style="color:#808080">onCreate</span>(Bundle savedInstanceState) {</div>
<div class="t mono" style="left:371px;top:269px;">        <span class="kw">super</span>.<span style="color:#ff0000">onCreate</span>(savedInstanceState);</div>
<div class="t mono" style="left:371px;top:286px;">        <span style="color:#ff0000">setContentView</span>(<span style="color:#ff0000">R</span>.layout.activity_main);</div>
<div class="t mono" style="left:371px;top:303px;">    }</div>
<div class="t mono" style="left:371px;top:320px;">}</div>
<svg class="a" style="left:1245px;top:131px" width="11" height="11" viewBox="0 0 11 11"><circle cx="5.5" cy="5.5" r="5.3" fill="#d9534f"/><rect x="4.6" y="2" width="1.8" height="4.6" fill="#fff"/><rect x="4.6" y="7.6" width="1.8" height="1.8" fill="#fff"/></svg>
<div class="a" style="left:1244px;top:180px;width:14px;height:2px;background:#d05050"></div>
<div class="a" style="left:1244px;top:214px;width:14px;height:2px;background:#a8a0ff"></div>
<div class="a" style="left:1244px;top:248px;width:14px;height:2px;background:#d05050"></div>
<div class="a" style="left:1244px;top:265px;width:14px;height:2px;background:#e8c020"></div>
<div class="a" style="left:1244px;top:282px;width:14px;height:2px;background:#d05050"></div>
<div class="a" style="left:1244px;top:299px;width:14px;height:2px;background:#d05050"></div>
<div class="a" style="left:22px;top:659px;width:1236px;height:1px;background:#a8a8a8"></div>
<div class="a" style="left:22px;top:660px;width:1236px;height:22px;background:linear-gradient(#e8e8e8,#dadada)"></div>
<div class="a" style="left:22px;top:682px;width:1236px;height:1px;background:#a8a8a8"></div>
<div class="t" style="left:27px;top:666px;color:#4a5060;letter-spacing:-0.559px">Messages:</div>
<div class="a" style="left:88px;top:660px;width:76px;height:22px;background:linear-gradient(#a0a0a0,#8e8e8e)"></div>
<div class="t" style="left:96.5px;top:666px;color:#e6e6e6;letter-spacing:-0.503px">Gradle Sync</div>
<div class="a" style="left:164px;top:660px;width:79px;height:22px;background:linear-gradient(#dedede,#d2d2d2)"></div>
<div class="a" style="left:243px;top:660px;width:1px;height:22px;background:#bbb"></div>
<div class="t" style="left:172.2px;top:666px;color:#707070;letter-spacing:-0.171px">Gradle Build</div>
<svg class="a" style="left:1210px;top:664px" width="16" height="14" viewBox="0 0 16 14"><g fill="#777"><circle cx="6.5" cy="7" r="4.2"/><path d="M5.5 0.8h2v2.5h-2zM5.5 10.7h2v2.5h-2zM0.3 6h2.5v2H0.3zM10.2 6h2.5v2h-2.5zM1.8 2.3l1.4-1.4 1.8 1.8-1.4 1.4zM8 9.7l1.4-1.4 1.8 1.8-1.4 1.4zM1.8 11.7l1.8-1.8 1.4 1.4-1.8 1.8zM8 4.3l1.8-1.8 1.4 1.4-1.8 1.8z"/></g><circle cx="6.5" cy="7" r="1.6" fill="#e0e0e0"/><path d="M13 6h3l-1.5 2z" fill="#777"/></svg>
<svg class="a" style="left:1239px;top:664px" width="13" height="14" viewBox="0 0 13 14"><path d="M6.5 1v8M3.5 6l3 3 3-3" fill="none" stroke="#777" stroke-width="1.4"/><rect x="1" y="10" width="11" height="3" fill="#999"/></svg>
<div class="a" style="left:22px;top:683px;width:58px;height:236px;background:#e8e8e8"></div>
<div class="a" style="left:80px;top:683px;width:1px;height:236px;background:#c6c6c6"></div>
<svg class="a" style="left:28px;top:688px" width="16" height="16" viewBox="0 0 16 16"><path d="M3 3l10 10M13 3L3 13" stroke="#d9756a" stroke-width="2.6"/></svg>
<svg class="a" style="left:29px;top:713px" width="14" height="16" viewBox="0 0 14 16"><path d="M7 2L2 8h3v6h4V8h3z" fill="#b0b0b0"/></svg>
<svg class="a" style="left:29px;top:738px" width="14" height="16" viewBox="0 0 14 16"><path d="M7 14L2 8h3V2h4v6h3z" fill="#b0b0b0"/></svg>
<svg class="a" style="left:28px;top:762px" width="16" height="16" viewBox="0 0 16 16"><rect x="2" y="4" width="8" height="10" fill="none" stroke="#808080" stroke-width="2"/><path d="M7 12c0-4 1-6 3.5-7.5" fill="none" stroke="#2e9a4a" stroke-width="2.2"/><path d="M7.5 4.5L11 1l3.5 3.5z" fill="#2e9a4a"/></svg>
<svg class="a" style="left:30px;top:788px" width="12" height="16" viewBox="0 0 12 16"><path d="M2.5 5a3.5 3.5 0 1 1 5 3c-1.5 1-1.5 1.5-1.5 3" fill="none" stroke="#3d8fd1" stroke-width="2.2"/><circle cx="6" cy="14" r="1.4" fill="#3d8fd1"/></svg>
<svg class="a" style="left:56px;top:687px" width="16" height="16" viewBox="0 0 16 16"><rect x="2" y="1" width="12" height="1.6" fill="#555"/><rect x="2" y="14" width="12" height="1.6" fill="#555"/><path d="M8 3.5L4.5 7.5h7z" fill="#3d8fd1"/><path d="M8 13L4.5 9h7z" fill="#3d8fd1"/></svg>
<svg class="a" style="left:56px;top:712px" width="16" height="16" viewBox="0 0 16 16"><rect x="1" y="7.2" width="14" height="1.6" fill="#555"/><path d="M8 6L4.5 2h7z" fill="#3d8fd1"/><path d="M8 10L4.5 14h7z" fill="#3d8fd1"/></svg>
<svg class="a" style="left:56px;top:737px" width="16" height="16" viewBox="0 0 16 16"><circle cx="7" cy="7" r="6" fill="#9a9a9a"/><rect x="6" y="3" width="2" height="5" fill="#fff"/><circle cx="11" cy="11.5" r="4" fill="#e04848"/><rect x="8.8" y="10.8" width="4.4" height="1.6" fill="#fff"/></svg>
<svg class="a" style="left:57px;top:763px" width="14" height="14" viewBox="0 0 14 14"><path d="M7 0v9M3.5 5.5L7 9l3.5-3.5" fill="none" stroke="#777" stroke-width="1.5"/><path d="M0 9.5h4l3 2 3-2h4V14H0z" fill="#d4a04e"/></svg>
<div class="a" style="left:81px;top:683px;width:1177px;height:236px;background:#fff"></div>
<div class="a" style="left:81px;top:700px;width:1164px;height:51px;background:#d5d5d5"></div>
<div class="a" style="left:1245px;top:683px;width:13px;height:222px;background:#f7f7f7"></div>
<div class="a" style="left:1245px;top:683px;width:1px;height:222px;background:#e8e8e8"></div>
<div class="a" style="left:81px;top:905px;width:1177px;height:1px;background:#e4e4e4"></div>
<div class="a" style="left:81px;top:906px;width:1177px;height:12px;background:#f7f7f7"></div>
<svg class="a" style="left:84px;top:688px" width="9" height="8" viewBox="0 0 9 8"><path d="M0 0H9L4.5 8Z" fill="#a0a0a0"/></svg>
<svg class="a" style="left:101px;top:684px" width="16" height="16" viewBox="0 0 16 16"><circle cx="8" cy="8" r="7" fill="#6cc15f" stroke="#3f9c3a" stroke-width="1"/><text x="8" y="12" font-family="Liberation Sans" font-size="10" font-weight="bold" text-anchor="middle" fill="#fff">G</text></svg>
<div class="t" style="left:121px;top:685px;;letter-spacing:-0.075px"><b>C:\Users\western\Desktop\salamdonya\app\build.gradle</b></div>
<svg class="a" style="left:124px;top:717px" width="13" height="13" viewBox="0 0 13 13"><circle cx="6.5" cy="6.5" r="6.2" fill="#e05a50"/><rect x="5.5" y="2.5" width="2" height="5.5" fill="#fff"/><rect x="5.5" y="9" width="2" height="2" fill="#fff"/></svg>
<div class="t" style="left:142px;top:719px;;letter-spacing:-0.383px">Error:(23, 17)</div>
<div class="t" style="left:217.6px;top:704px;;letter-spacing:0.235px">Failed to resolve: junit:junit:4.12</div>
<div class="t" style="left:217.6px;top:719px;;letter-spacing:0.052px"><i class="lnk">Show in File</i></div>
<div class="t" style="left:217.6px;top:734px;;letter-spacing:0.273px"><i class="lnk">Show in Project Structure dialog</i></div>
<div class="a" style="left:0px;top:918px;width:1280px;height:1px;background:#b0b0b0"></div>
<div class="a" style="left:0px;top:919px;width:1280px;height:21px;background:#e8e8e8"></div>
<div class="a" style="left:0px;top:940px;width:1280px;height:1px;background:#b0b0b0"></div>
<div class="a" style="left:0px;top:941px;width:1280px;height:21px;background:#e8e8e8"></div>
<svg class="a" style="left:28px;top:922px" width="15" height="15" viewBox="0 0 15 15"><ellipse cx="5" cy="4" rx="4" ry="3" fill="#fff" stroke="#666"/><circle cx="9" cy="8.5" r="3" fill="#f3c48d"/><path d="M6 8h6" stroke="#555"/><rect x="4" y="11" width="10" height="4" rx="1" fill="#4a90d0"/></svg>
<div class="t" style="left:46px;top:924px;;letter-spacing:-0.613px">TODO</div>
<svg class="a" style="left:98px;top:922px" width="14" height="14" viewBox="0 0 16 16"><g fill="#97c024"><path d="M3.5 7a4.5 4.5 0 0 1 9 0z"/><rect x="3.5" y="7.6" width="9" height="5.5" rx="0.8"/><rect x="1" y="7.6" width="2" height="5" rx="1"/><rect x="13" y="7.6" width="2" height="5" rx="1"/><rect x="5" y="12" width="2" height="3.5" rx="1"/><rect x="9" y="12" width="2" height="3.5" rx="1"/><path d="M4.5 1.5l1.5 2.5M11.5 1.5l-1.5 2.5" stroke="#97c024" stroke-width="0.9"/></g><circle cx="6.3" cy="5.2" r="0.7" fill="#fff"/><circle cx="9.7" cy="5.2" r="0.7" fill="#fff"/></svg>
<div class="t" style="left:116px;top:924px;;letter-spacing:0.144px"><u>6</u>: Android Monitor</div>
<svg class="a" style="left:240px;top:923px" width="13" height="13" viewBox="0 0 13 13"><rect x="0.5" y="0.5" width="12" height="12" fill="#8a8a8a" stroke="#6a6a6a"/><rect x="2" y="2" width="9" height="9" fill="#f0f0f0"/><path d="M3.5 4l2 2-2 2M6 9h3" fill="none" stroke="#555" stroke-width="1"/></svg>
<div class="t" style="left:256px;top:924px;;letter-spacing:-0.170px">Terminal</div>
<div class="a" style="left:309px;top:919px;width:100px;height:21px;background:#c9c9c9"></div>
<svg class="a" style="left:320px;top:922px" width="13" height="14" viewBox="0 0 13 14"><rect x="0.5" y="0.5" width="12" height="13" fill="#f4d290" stroke="#d9a54a"/><path d="M3 4h7M3 6.5h7M3 9h7" stroke="#b07820"/></svg>
<div class="t" style="left:338px;top:924px;;letter-spacing:-0.459px"><u>0</u>: Messages</div>
<svg class="a" style="left:1057px;top:922px" width="13" height="14" viewBox="0 0 13 14"><path d="M1 1.5Q1 0.5 2 0.5H11Q12 0.5 12 1.5V8Q12 9 11 9H8L5 13V9H2Q1 9 1 8Z" fill="#e0645a"/><rect x="5.6" y="2" width="1.8" height="4" fill="#fff"/><rect x="5.6" y="6.8" width="1.8" height="1.4" fill="#fff"/></svg>
<div class="t" style="left:1069px;top:924px;"><span style="font-size:10px;font-weight:bold">1</span></div>
<div class="t" style="left:1080px;top:924px;;letter-spacing:-0.339px">Event Log</div>
<svg class="a" style="left:1152px;top:923px" width="13" height="13" viewBox="0 0 13 13"><rect x="0.5" y="0.5" width="12" height="12" fill="#dfeaf5" stroke="#4a86c0"/><path d="M3 4h7M3 6.5h7M3 9h5" stroke="#4a6a90"/></svg>
<div class="t" style="left:1169px;top:924px;;letter-spacing:-0.242px">Gradle Console</div>
<svg class="a" style="left:9px;top:944px" width="14" height="14" viewBox="0 0 14 14"><rect x="0.5" y="0.5" width="13" height="13" fill="#cfcfcf" stroke="#888"/></svg>
<div class="t" style="left:31px;top:945px;;letter-spacing:-0.136px">Generate Signed APK: Errors while building APK. You can find the errors in the 'Messages' view. (today 04:49 PM)</div>
<div class="t" style="left:967.5px;top:945px;;letter-spacing:-0.590px">6:14</div>
<div class="t" style="left:1000.6px;top:945px;;letter-spacing:-1.086px">CRLF</div>
<svg class="a" style="left:1029px;top:947px" width="6" height="10" viewBox="0 0 6 10"><path d="M0 4L3 0 6 4zM0 6l3 4 3-4z" fill="#555"/></svg>
<div class="t" style="left:1044.4px;top:945px;;letter-spacing:-0.600px">UTF-8</div>
<svg class="a" style="left:1077px;top:947px" width="6" height="10" viewBox="0 0 6 10"><path d="M0 4L3 0 6 4zM0 6l3 4 3-4z" fill="#555"/></svg>
<div class="t" style="left:1091.5px;top:945px;color:#999;letter-spacing:-0.020px">Context: &lt;no context&gt;</div>
<svg class="a" style="left:1238px;top:947px" width="10" height="11" viewBox="0 0 10 11"><rect x="3" y="5" width="7" height="6" fill="#808080"/><path d="M1 5V3a2 2 0 0 1 4 0V5" fill="none" stroke="#808080" stroke-width="1.2"/><rect x="5.8" y="7" width="1.4" height="2" fill="#e8e8e8"/></svg>
<svg class="a" style="left:1258px;top:944px" width="15" height="17" viewBox="0 0 15 17"><path d="M3 6A4.5 4.5 0 0 1 12 6Z" fill="#9a9a9a"/><path d="M1.5 6.5h12" stroke="#777" stroke-width="1.2"/><path d="M3.5 7v3a4 4 0 0 0 8 0V7" fill="#f0f0f0" stroke="#777" stroke-width="1.1"/><circle cx="6" cy="8.5" r="0.7" fill="#555"/><circle cx="9" cy="8.5" r="0.7" fill="#555"/><path d="M5.5 11h4" stroke="#666" stroke-width="1.2"/><path d="M2 16.5c0-2 2-3 5.5-3s5.5 1 5.5 3" fill="none" stroke="#777" stroke-width="1.1"/></svg>
<div class="a" style="left:3px;top:49px;width:770px;height:205px;border:4px solid #000;opacity:0.5;filter:blur(3px);transform:translate(4px,4px)"></div>
<div class="a" style="left:3px;top:49px;width:770px;height:205px;border:4px solid #ff0000"></div>
<div class="a" style="left:32px;top:672px;width:441px;height:116px;border:4px solid #000;opacity:0.5;filter:blur(3px);transform:translate(4px,4px)"></div>
<div class="a" style="left:32px;top:672px;width:441px;height:116px;border:4px solid #ff0000"></div>
</body></html>
